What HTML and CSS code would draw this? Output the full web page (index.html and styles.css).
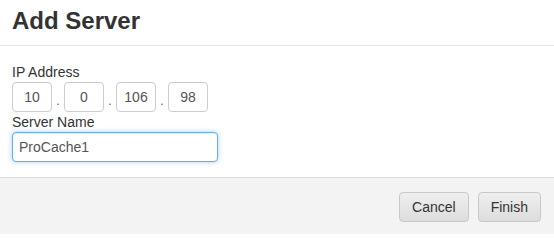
FILE: index.html
```html
<!DOCTYPE html>
<html>
<head>
<meta charset="utf-8">
<link rel="stylesheet" href="styles.css">
</head>
<body>
<div class="modal">
  <div class="modal-header">
    <h4 class="title">Add Server</h4>
  </div>
  <div class="modal-body">
    <label class="label">IP Address</label>
    <div class="ip-row">
      <input class="octet" type="text" value="10">
      <span class="dot">.</span>
      <input class="octet" type="text" value="0">
      <span class="dot">.</span>
      <input class="octet" type="text" value="106">
      <span class="dot">.</span>
      <input class="octet" type="text" value="98">
    </div>
    <label class="label">Server Name</label>
    <input class="name-input" type="text" value="ProCache1">
  </div>
  <div class="modal-footer">
    <button class="btn">Cancel</button>
    <button class="btn">Finish</button>
  </div>
</div>
</body>
</html>
```
FILE: styles.css
```css
html, body {
  margin: 0;
  padding: 0;
  background: #fff;
}
body {
  font-family: "Liberation Sans", Arial, sans-serif;
  font-size: 14px;
  color: #333;
  width: 554px;
  height: 234px;
  overflow: hidden;
}
.modal {
  display: flex;
  flex-direction: column;
  height: 234px;
}
.modal-header {
  padding: 8px 12px 11px;
  border-bottom: 1px solid #e5e5e5;
}
.title {
  margin: 0;
  font-size: 24px;
  line-height: 26px;
  font-weight: bold;
  color: #333;
}
.modal-body {
  padding: 16px 12px 15px;
  display: flex;
  flex-direction: column;
  align-items: flex-start;
}
.label {
  display: block;
  line-height: 20px;
  height: 20px;
  color: #333;
}
.ip-row {
  display: flex;
  align-items: center;
  height: 30px;
}
.octet {
  box-sizing: border-box;
  width: 40px;
  height: 30px;
  margin: 0;
  padding: 0;
  border: 1px solid #ccc;
  border-radius: 4px;
  text-align: center;
  font-family: "Liberation Sans", Arial, sans-serif;
  font-size: 14px;
  color: #555;
  background: #fff;
  outline: none;
}
.dot {
  width: 12px;
  text-align: center;
  color: #555;
  font-size: 12px;
  padding-top: 8px;
}
.name-input {
  box-sizing: border-box;
  width: 206px;
  height: 30px;
  margin: 0;
  padding: 0 6px;
  border: 1px solid #66afe9;
  border-radius: 4px;
  box-shadow: inset 0 1px 1px rgba(0,0,0,.075), 0 0 5px rgba(102,175,233,.6);
  font-family: "Liberation Sans", Arial, sans-serif;
  font-size: 14px;
  color: #555;
  background: #fff;
  outline: none;
}
.modal-footer {
  flex: 1;
  background: #f3f3f3;
  border-top: 1px solid #dcdcdc;
  display: flex;
  justify-content: flex-end;
  align-items: flex-start;
  gap: 9px;
  padding: 14px 13px 0 0;
}
.btn {
  box-sizing: border-box;
  height: 30px;
  padding: 0 12px;
  border: 1px solid #c8c8c8;
  border-radius: 4px;
  background: linear-gradient(to bottom, #efefef, #dddddd);
  font-family: "Liberation Sans", Arial, sans-serif;
  font-size: 14px;
  color: #333;
  cursor: pointer;
}
```
